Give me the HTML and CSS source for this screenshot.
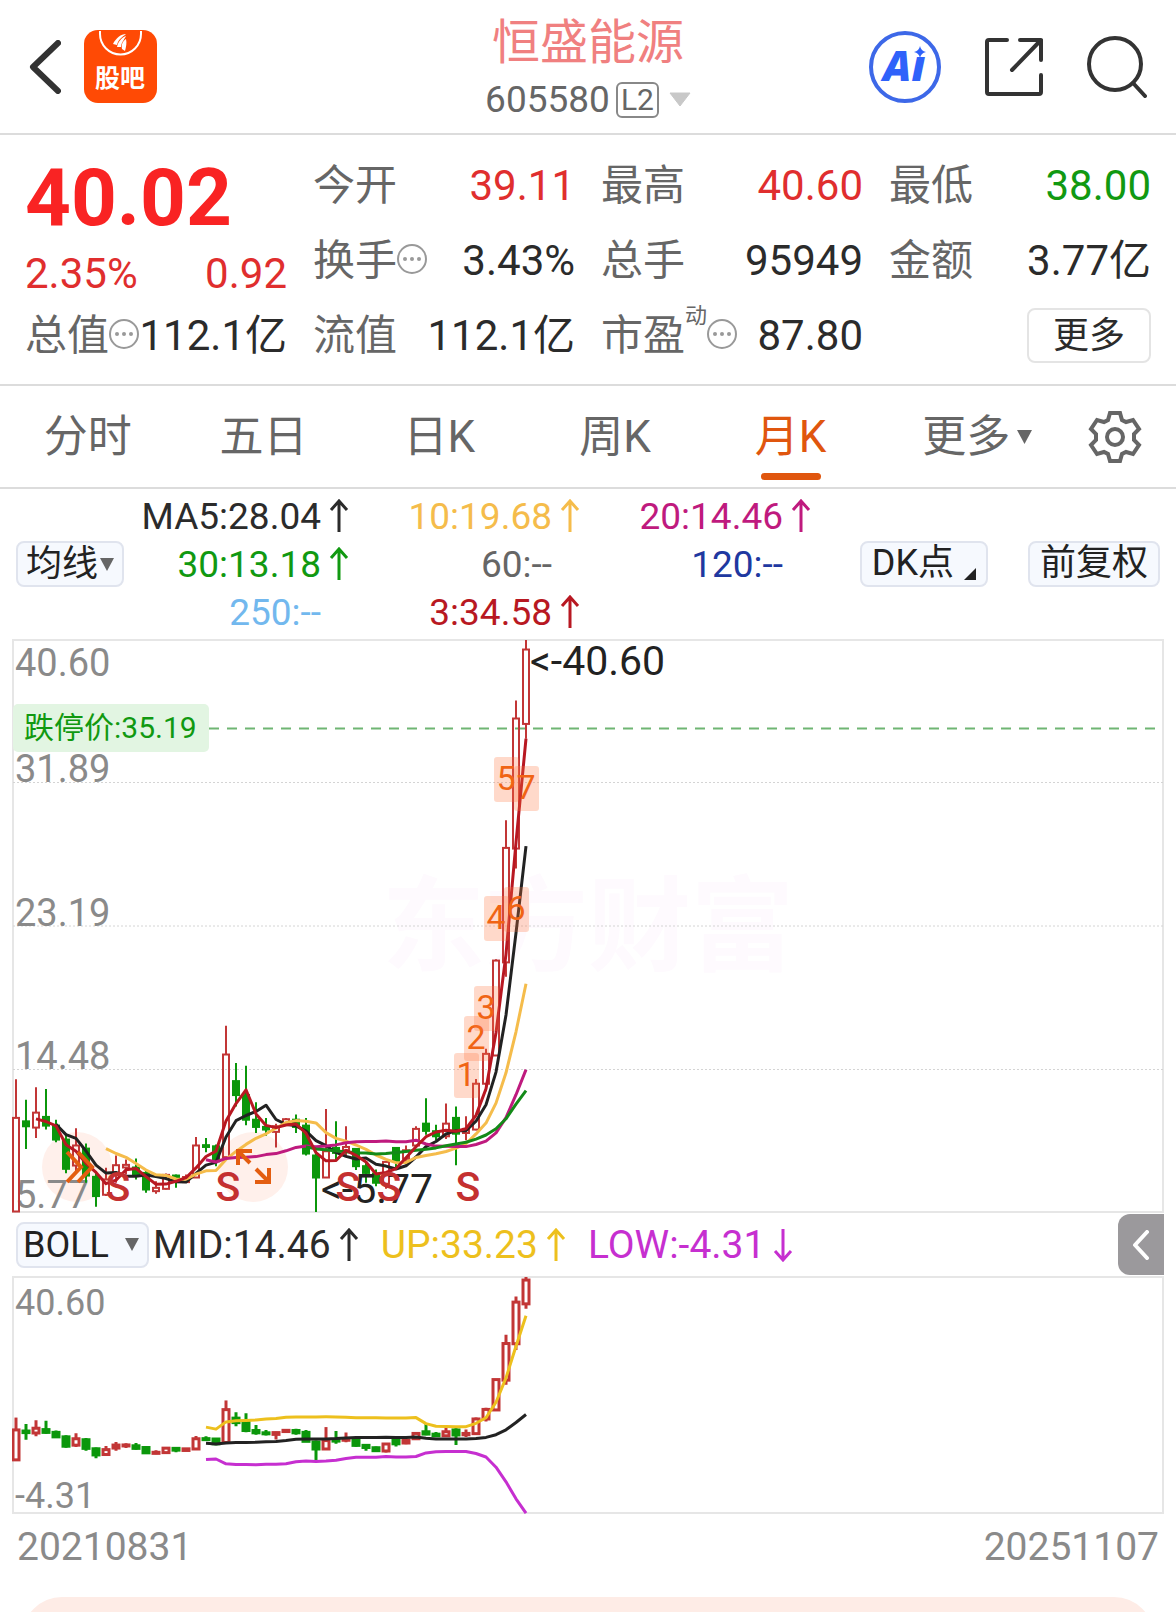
FILE: index.html
```html
<!DOCTYPE html>
<html lang="zh-CN">

<head>
    <meta charset="UTF-8">
    <meta name="viewport" content="width=device-width, initial-scale=1.0">
    <title>恒盛能源 605580</title>
    <link rel="stylesheet" href="styles.css">
</head>

<body>
    <!-- Shared arrow shapes -->
    <svg class="sprite" aria-hidden="true">
        <symbol id="up" viewBox="0 0 20 34"><path d="M10 33V2M2 11l8-9 8 9" /></symbol>
        <symbol id="down" viewBox="0 0 20 34"><path d="M10 1v31M2 23l8 9 8-9" /></symbol>
        <symbol id="more-info" viewBox="0 0 30 30">
            <circle cx="15" cy="15" r="14" fill="none" stroke="#999" stroke-width="2" />
            <g fill="#999"><circle cx="8" cy="15" r="2" /><circle cx="15" cy="15" r="2" /><circle cx="22" cy="15" r="2" /></g>
        </symbol>
    </svg>

    <header class="header">
        <div class="header-left">
            <button class="icon-button" aria-label="返回">
                <svg width="32" height="54" viewBox="0 0 32 54"><path d="M29 3L4 27l25 24" fill="none" stroke="#333" stroke-width="6" stroke-linejoin="round" stroke-linecap="round" /></svg>
            </button>
            <a href="#" class="logo" aria-label="股吧">
                <svg width="73" height="73" viewBox="0 0 73 73">
                    <rect width="73" height="73" rx="14" fill="#ff4a05" />
                    <path d="M16 1v3a20 20 0 0 0 41 0V1" fill="none" stroke="#fff" stroke-width="2" />
                    <path d="M29 14c3-6 8-10 13-10-4 3-8 6-9 11zM33 17c1-5 4-9 9-11-2 4-5 7-5 11zM38 19c-1-5 1-8 4-10 1 4 0 8-1 12z" fill="#fff" />
                    <text x="36" y="57" class="logo-text">股吧</text>
                </svg>
            </a>
        </div>
        <div class="title">
            <h1>恒盛能源</h1>
            <div class="code">
                <span>605580</span>
                <span class="level">L2</span>
                <svg width="22" height="15" viewBox="0 0 22 15"><path d="M1 1h20L11 14z" fill="#c8c8c8" stroke="#c8c8c8" stroke-linejoin="round" /></svg>
            </div>
        </div>
        <div class="header-right">
            <button class="icon-button" aria-label="AI">
                <svg width="72" height="72" viewBox="0 0 72 72">
                    <circle cx="36" cy="36" r="34" fill="none" stroke="#3d68e8" stroke-width="4" />
                    <text x="14" y="50" class="ai-text">Aı</text>
                    <path d="M51 15q1 5 6 6-5 1-6 6-1-5-6-6 5-1 6-6z" fill="#2f62fa" />
                </svg>
            </button>
            <button class="icon-button" aria-label="分享">
                <svg width="60" height="60" viewBox="0 0 60 60"><path d="M23 3H5a2 2 0 0 0-2 2v50a2 2 0 0 0 2 2h50a2 2 0 0 0 2-2V38M36 3h21v20M57 3L28 33" fill="none" stroke="#333" stroke-width="4" stroke-linecap="round" stroke-linejoin="round" /></svg>
            </button>
            <button class="icon-button" aria-label="搜索">
                <svg width="60" height="62" viewBox="0 0 60 62"><circle cx="28" cy="28" r="26" fill="none" stroke="#333" stroke-width="4" /><path d="M46 47l12 13" stroke="#333" stroke-width="4" stroke-linecap="round" /></svg>
            </button>
        </div>
    </header>

    <section class="quote">
        <div class="last">
            <strong>40.02</strong>
            <div class="change"><span>2.35%</span><span>0.92</span></div>
        </div>
        <div class="item"><span>今开</span><b class="red">39.11</b></div>
        <div class="item"><span>最高</span><b class="red">40.60</b></div>
        <div class="item"><span>最低</span><b class="green">38.00</b></div>
        <div class="item"><span>换手</span><svg class="info"><use href="#more-info" /></svg><b>3.43%</b></div>
        <div class="item"><span>总手</span><b>95949</b></div>
        <div class="item"><span>金额</span><b>3.77亿</b></div>
        <div class="item"><span>总值</span><svg class="info"><use href="#more-info" /></svg><b>112.1亿</b></div>
        <div class="item"><span>流值</span><b>112.1亿</b></div>
        <div class="item"><span>市盈</span><sup>动</sup><svg class="info"><use href="#more-info" /></svg><b>87.80</b></div>
        <div class="item"><button class="more">更多</button></div>
    </section>

    <nav class="tabs">
        <button>分时</button>
        <button>五日</button>
        <button>日K</button>
        <button>周K</button>
        <button class="active">月K</button>
        <button class="wide">更多<svg width="15" height="14" viewBox="0 0 15 14"><path d="M0 0h15L7.500 14z" fill="#666" /></svg></button>
        <button class="gear" aria-label="设置">
            <svg width="54" height="54" viewBox="-27 -27 54 54" fill="none" stroke="#666" stroke-width="4">
                <path d="M-5-24H5l2 7 4 2 7-2 6 9-5 5v6l5 5-6 9-7-2-4 2-2 7H-5l-2-7-4-2-7 2-6-9 5-5v-6l-5-5 6-9 7 2 4-2z" />
                <circle r="8" />
            </svg>
        </button>
    </nav>

    <section class="averages">
        <select class="chip chip-ma" aria-label="主图指标"><option>均线</option></select>
        <div class="ma-list">
            <span class="ma5">MA5:28.04<svg class="arrow"><use href="#up" /></svg></span>
            <span class="ma10">10:19.68<svg class="arrow"><use href="#up" /></svg></span>
            <span class="ma20">20:14.46<svg class="arrow"><use href="#up" /></svg></span>
            <span class="ma30">30:13.18<svg class="arrow"><use href="#up" /></svg></span>
            <span class="ma60">60:--<i class="arrow"></i></span>
            <span class="ma120">120:--<i class="arrow"></i></span>
            <span class="ma250">250:--<i class="arrow"></i></span>
            <span class="ma3">3:34.58<svg class="arrow"><use href="#up" /></svg></span>
        </div>
        <div class="chips">
            <button class="chip">DK点<svg class="corner" width="12" height="12" viewBox="0 0 12 12"><path d="M12 0v12H0z" fill="#222" /></svg></button>
            <button class="chip">前复权</button>
        </div>
    </section>

    <main class="charts">
        <svg class="chart" viewBox="0 0 1152 574" role="img" aria-label="月K线">
            <text class="watermark" x="576" y="324">东方财富</text>
            <rect class="frame" x="1" y="1" width="1150" height="572" />
            <path class="grid" d="M1 143.500H1151M1 287H1151M1 430.500H1151" />
            <path class="limit" d="M197 89.500H1151" />
            <g class="halo"><circle cx="65" cy="528" r="35" /><circle cx="241" cy="528" r="35" /></g>
            <rect x="1" y="65" width="196" height="48" rx="5" fill="#e2f5e2" />
            <text class="limit-text" x="12" y="99">跌停价:35.19</text>
            <g class="scale scale-main">
                <text x="3" y="37">40.60</text>
                <text x="3" y="143">31.89</text>
                <text x="3" y="287">23.19</text>
                <text x="3" y="430">14.48</text>
                <text x="3" y="569">5.77</text>
            </g>
            <g id="kline"></g>
            <path class="signal" d="M55 513l14 15-14 15M66 513l14 15-14 15M238 524l-12-12M240 512h-14v14M244 530l13 13M257 529v14h-14" />
            <text class="callout" x="518" y="36">&lt;-40.60</text>
            <text class="callout" x="309" y="564">&lt;-5.77</text>
            <g class="sell">
                <text x="106" y="562">S</text>
                <text x="216" y="562">S</text>
                <text x="336" y="562">S</text>
                <text x="377" y="562">S</text>
                <text x="456" y="562">S</text>
            </g>
            <g id="streak"></g>
        </svg>

        <div class="boll">
            <select class="chip chip-boll" aria-label="副图指标"><option>BOLL</option></select>
            <span>MID:14.46<svg class="arrow"><use href="#up" /></svg></span>
            <span class="boll-up">UP:33.23<svg class="arrow"><use href="#up" /></svg></span>
            <span class="boll-low">LOW:-4.31<svg class="arrow"><use href="#down" /></svg></span>
            <button class="expand" aria-label="展开">
                <svg width="18" height="30" viewBox="0 0 18 30"><path d="M15 2L3 15l12 13" fill="none" stroke="#fff" stroke-width="4" stroke-linecap="round" stroke-linejoin="round" /></svg>
            </button>
        </div>

        <svg class="chart" viewBox="0 0 1152 238" role="img" aria-label="BOLL">
            <rect class="frame" x="1" y="1" width="1150" height="236" />
            <g class="scale">
                <text x="3" y="39">40.60</text>
                <text x="3" y="232">-4.31</text>
            </g>
            <g id="bollinger"></g>
        </svg>
        <div class="dates"><span>20210831</span><span>20251107</span></div>
    </main>

    <footer class="footer"><div class="sheet"></div></footer>

    <script src="script.js"></script>
</body>

</html>
```
FILE: styles.css
```css
* {
    box-sizing: border-box;
}

body {
    margin: 0;
    font-family: Roboto, "Noto Sans CJK SC", sans-serif;
    font-size: 42px;
    color: #2b2b2b;
    background: #fff;
}

svg {
    display: block;
    flex-shrink: 0;
}

button,
select {
    font: inherit;
    color: inherit;
    background: none;
    border: none;
    padding: 0;
    cursor: pointer;
}

.sprite {
    position: absolute;
    width: 0;
    height: 0;
}

/* Header */
.header {
    display: grid;
    grid-template-columns: 1fr auto 1fr;
    align-items: center;
    height: 135px;
    padding: 0 29px;
    border-bottom: 2px solid #dcdcdc;
}

.header-left,
.header-right {
    display: flex;
    align-items: center;
}

.header-left {
    gap: 23px;
}

.header-right {
    justify-content: flex-end;
    gap: 43px;
}

.logo-text {
    font-size: 25px;
    font-weight: bold;
    fill: #fff;
    text-anchor: middle;
}

.ai-text {
    font-family: "Open Sans", sans-serif;
    font-size: 42px;
    font-weight: 800;
    font-style: italic;
    fill: #2f62fa;
}

.title {
    padding-top: 6px;
    text-align: center;
}

h1 {
    margin: 0;
    font-size: 48px;
    line-height: 60px;
    font-weight: normal;
    color: #f08080;
}

.code {
    display: flex;
    align-items: center;
    justify-content: center;
    gap: 6px;
    font-size: 37px;
    line-height: 54px;
    color: #666;
}

.level {
    padding: 0 3px;
    margin-right: 4px;
    border: 2px solid #888;
    border-radius: 6px;
    font-size: 30px;
    line-height: 32px;
}

/* Quote */
.quote {
    display: grid;
    grid-template-columns: repeat(4, 1fr);
    grid-template-rows: repeat(3, 75px);
    column-gap: 26px;
    padding: 13px 25px 11px;
    border-bottom: 2px solid #dcdcdc;
}

.last {
    grid-row: span 2;
    color: #e02e2e;
}

.last strong {
    display: block;
    font-size: 80px;
    line-height: 100px;
    color: #f92323;
}

.change {
    display: flex;
    justify-content: space-between;
    line-height: 52px;
}

.item {
    display: flex;
    align-items: center;
    line-height: 75px;
    white-space: nowrap;
}

.item span,
.item sup {
    color: #666;
}

.item sup {
    align-self: flex-start;
    font-size: 22px;
    line-height: 36px;
}

.item b {
    margin-left: auto;
    font-weight: normal;
}

.info {
    width: 30px;
    height: 30px;
    margin-bottom: 4px;
}

.item .red {
    color: #e02e2e;
}

.item .green {
    color: #119911;
}

.more {
    width: 124px;
    height: 55px;
    margin-left: auto;
    border: 2px solid #e4e4e4;
    border-radius: 8px;
    font-size: 36px;
    line-height: 48px;
}

/* Tabs */
.tabs {
    display: flex;
    height: 103px;
    padding-right: 22px;
    border-bottom: 2px solid #dcdcdc;
    font-size: 44px;
    line-height: 60px;
    color: #666;
}

.tabs button {
    position: relative;
    display: flex;
    flex: 176 0 0;
    align-items: center;
    justify-content: center;
    gap: 7px;
}

.tabs .wide {
    flex-grow: 198;
}

.tabs .gear {
    flex-grow: 78;
}

.tabs .active {
    color: #e0560e;
}

.tabs .active::after {
    content: "";
    position: absolute;
    bottom: 7px;
    width: 60px;
    height: 7px;
    border-radius: 4px;
    background: #e0560e;
}

/* Moving averages */
.averages {
    display: flex;
    align-items: center;
    padding: 3px 16px;
    font-size: 37px;
}

.chip {
    height: 46px;
    padding: 0 10px;
    border: 2px solid #e0e4ee;
    border-radius: 8px;
    background-color: #f6f9fe;
    font-size: 36px;
    line-height: 40px;
    color: #222;
}

select.chip {
    appearance: none;
    background-image: url("data:image/svg+xml,%3Csvg xmlns='http://www.w3.org/2000/svg' width='14' height='13'%3E%3Cpath d='M0 0h14L7 13z' fill='%23666'/%3E%3C/svg%3E");
    background-repeat: no-repeat;
    background-position: right 8px center;
}

.chip-ma {
    width: 108px;
    padding: 0 0 0 8px;
}

.ma-list {
    display: grid;
    flex: 0 1 687px;
    grid-template-columns: 225fr 231fr 231fr;
    grid-auto-rows: 48px;
}

.ma-list span,
.boll span {
    display: flex;
    align-items: center;
    justify-content: flex-end;
    white-space: nowrap;
}

.arrow {
    width: 20px;
    height: 34px;
    margin-left: 8px;
    fill: none;
    stroke: currentColor;
    stroke-width: 3;
}

.chips {
    display: flex;
    flex: 1;
    justify-content: flex-end;
    gap: 40px;
}

.chips .chip {
    display: flex;
    gap: 10px;
}

.corner {
    align-self: flex-end;
    margin-bottom: 5px;
}

.ma10 { color: #f5bc4b; }
.ma20 { color: #bf1a7e; }
.ma30 { color: #119911; }
.ma60 { color: #666; }
.ma120 { color: #2038a0; }
.ma250 { color: #72b8ee; }
.ma3 { color: #b81822; }

/* Charts */
.charts {
    padding: 0 12px;
}

.chart {
    width: 100%;
    height: auto;
}

.chart polyline {
    fill: none;
    stroke-width: 3;
    stroke-linejoin: round;
}

.frame {
    fill: none;
    stroke: #e6e6e6;
    stroke-width: 2;
}

.grid {
    stroke: #d4d4d4;
    stroke-dasharray: 2 2;
}

.limit {
    stroke: #6fb573;
    stroke-width: 2;
    stroke-dasharray: 10 8;
}

.limit-text {
    font-size: 30px;
    fill: #119911;
}

.watermark {
    font-size: 103px;
    font-weight: bold;
    text-anchor: middle;
    fill: #fefafe;
}

.scale {
    font-size: 36px;
    fill: #8a8a8a;
}

.scale-main {
    font-size: 38px;
}

.halo {
    fill: #fff0eb;
}

.signal {
    fill: none;
    stroke: #e35d10;
    stroke-width: 4;
}

.callout {
    font-size: 41px;
    fill: #222;
}

.sell {
    font-size: 41px;
    font-weight: 500;
    text-anchor: middle;
    fill: #c43030;
}

#streak {
    font-size: 34px;
    text-anchor: middle;
    fill: #f06414;
}

#streak rect {
    fill: #ff7840;
    opacity: 0.28;
}

.boll {
    display: flex;
    align-items: center;
    height: 63px;
    padding-left: 4px;
    font-size: 39px;
}

.boll span {
    margin-right: 22px;
}

.chip-boll {
    width: 133px;
    padding: 0 0 0 5px;
    margin-right: 4px;
}

.boll-up { color: #edc01d; }
.boll-low { color: #c62fd0; }

.expand {
    display: flex;
    align-items: center;
    justify-content: center;
    width: 46px;
    height: 61px;
    margin-left: auto;
    border-radius: 12px 0 0 12px;
    background: #9b999c;
}

.dates {
    display: flex;
    justify-content: space-between;
    padding: 0 5px;
    font-size: 39px;
    line-height: 66px;
    color: #8a8a8a;
}

.footer {
    height: 16px;
    margin-top: 17px;
    padding: 0 22px;
    overflow: hidden;
}

.sheet {
    height: 80px;
    border-radius: 40px;
    background: #feece6;
}
```
FILE: script.js
```js
// Monthly candles: [open, close, high, low]
const candles = [
    [5.80, 11.50, 13.85, 5.80], [11.29, 10.99, 12.61, 9.61], [10.91, 11.82, 13.36, 10.28],
    [11.56, 11.03, 13.26, 10.79], [11.03, 10.18, 11.39, 10.02], [10.18, 8.40, 10.48, 8.13],
    [8.60, 9.82, 10.87, 8.26], [9.63, 7.99, 9.94, 7.55], [7.91, 6.74, 8.15, 6.09],
    [6.82, 7.75, 8.46, 6.74], [8.05, 8.62, 9.21, 7.55], [8.48, 8.64, 8.96, 8.05],
    [8.48, 7.99, 9.03, 7.75], [8.15, 7.14, 8.36, 6.94], [7.04, 7.24, 7.65, 6.88],
    [7.18, 8.03, 8.11, 7.14], [7.99, 7.65, 8.05, 7.24], [7.59, 7.90, 8.05, 7.55],
    [7.87, 9.82, 10.34, 7.87], [9.84, 9.73, 10.28, 9.41], [9.77, 8.86, 9.88, 8.56],
    [9.11, 15.36, 17.11, 9.11], [13.74, 12.89, 14.84, 12.20], [12.89, 11.39, 14.68, 11.05],
    [11.39, 10.95, 12.45, 10.58], [10.95, 10.79, 11.50, 10.42], [10.65, 10.99, 11.15, 9.69],
    [11.19, 11.42, 11.50, 11.10], [11.39, 10.95, 11.70, 10.58], [11.03, 9.33, 11.50, 9.21],
    [9.21, 7.87, 9.47, 5.77], [7.87, 9.47, 12.04, 7.87], [9.67, 9.37, 11.29, 8.86],
    [9.53, 9.73, 10.99, 9.17], [9.61, 8.56, 9.67, 8.32], [8.56, 8.15, 8.76, 7.55],
    [8.11, 7.55, 8.36, 7.34], [7.49, 8.82, 8.86, 7.18], [9.67, 8.86, 9.73, 8.36],
    [9.01, 9.53, 9.82, 8.76], [9.82, 10.83, 10.99, 9.67], [11.15, 10.71, 12.69, 10.48],
    [10.69, 10.38, 11.09, 10.14], [10.38, 11.15, 12.37, 10.22], [11.50, 10.54, 12.20, 8.62],
    [10.58, 10.83, 11.60, 10.14], [10.79, 13.58, 13.87, 10.75], [13.58, 15.40, 15.71, 13.12],
    [15.30, 21.08, 21.16, 15.30], [20.97, 27.94, 29.62, 20.10], [27.90, 35.82, 36.91, 26.69],
    [35.49, 40.02, 40.60, 34.58]
];

const closes = candles.map(c => c[1]);
const svgNS = 'http://www.w3.org/2000/svg';

function add(parent, tag, attrs, text) {
    const el = document.createElementNS(svgNS, tag);
    Object.keys(attrs).forEach(key => el.setAttribute(key, attrs[key]));
    if (text) el.textContent = text;
    parent.appendChild(el);
}

// Center of a candle
function xAt(i) {
    return 4 + i * 10;
}

// Price to y for a plot of the given range and height
function makeScale(max, min, height) {
    return price => 1 + (max - price) / (max - min) * (height - 2);
}

// Average of the last n closes, with the standard deviation
function stats(i, n) {
    const part = closes.slice(i - n + 1, i + 1);
    const mean = part.reduce((a, b) => a + b, 0) / n;
    const variance = part.reduce((a, b) => a + (b - mean) ** 2, 0) / (n - 1);
    return { mean, dev: Math.sqrt(variance) };
}

function drawCandles(parent, y, line) {
    candles.forEach(([open, close, high, low], i) => {
        const x = xAt(i);
        const up = close >= open;
        const color = up ? '#c23636' : '#0b970b';
        const top = y(Math.max(open, close));
        const bottom = y(Math.min(open, close));
        add(parent, 'path', {
            d: `M${x} ${y(high)}V${top}M${x} ${bottom}V${y(low)}`,
            stroke: color,
            'stroke-width': line
        });
        add(parent, 'rect', {
            x: x - 3,
            y: top,
            width: 6,
            height: Math.max(bottom - top, 1),
            fill: up ? 'none' : color,
            stroke: color,
            'stroke-width': line
        });
    });
}

function drawLine(parent, y, n, color, k = 0) {
    const points = [];
    for (let i = n - 1; i < closes.length; i++) {
        const s = stats(i, n);
        points.push(`${xAt(i)},${y(s.mean + k * s.dev).toFixed(1)}`);
    }
    add(parent, 'polyline', { points: points.join(' '), stroke: color });
}

// Main chart
const kline = document.getElementById('kline');
const mainY = makeScale(40.60, 5.77, 574);
drawCandles(kline, mainY, 2);
drawLine(kline, mainY, 5, '#222');
drawLine(kline, mainY, 10, '#f5bc4b');
drawLine(kline, mainY, 20, '#bf1a7e');
drawLine(kline, mainY, 30, '#138a18');
drawLine(kline, mainY, 3, '#b81822');

// Rising streak counters over the last seven months
const streak = document.getElementById('streak');
[414, 377, 347, 257, 118, 248, 127].forEach((top, i) => {
    const x = xAt(45 + i);
    add(streak, 'rect', { x: x - 12, y: top, width: 25, height: 45, rx: 3 });
    add(streak, 'text', { x: x, y: top + 33 }, String(i + 1));
});

// BOLL chart
const bollinger = document.getElementById('bollinger');
const bollY = makeScale(40.60, -4.31, 238);
drawCandles(bollinger, bollY, 3);
drawLine(bollinger, bollY, 20, '#222');
drawLine(bollinger, bollY, 20, '#edc01d', 2);
drawLine(bollinger, bollY, 20, '#c62fd0', -2);
```
